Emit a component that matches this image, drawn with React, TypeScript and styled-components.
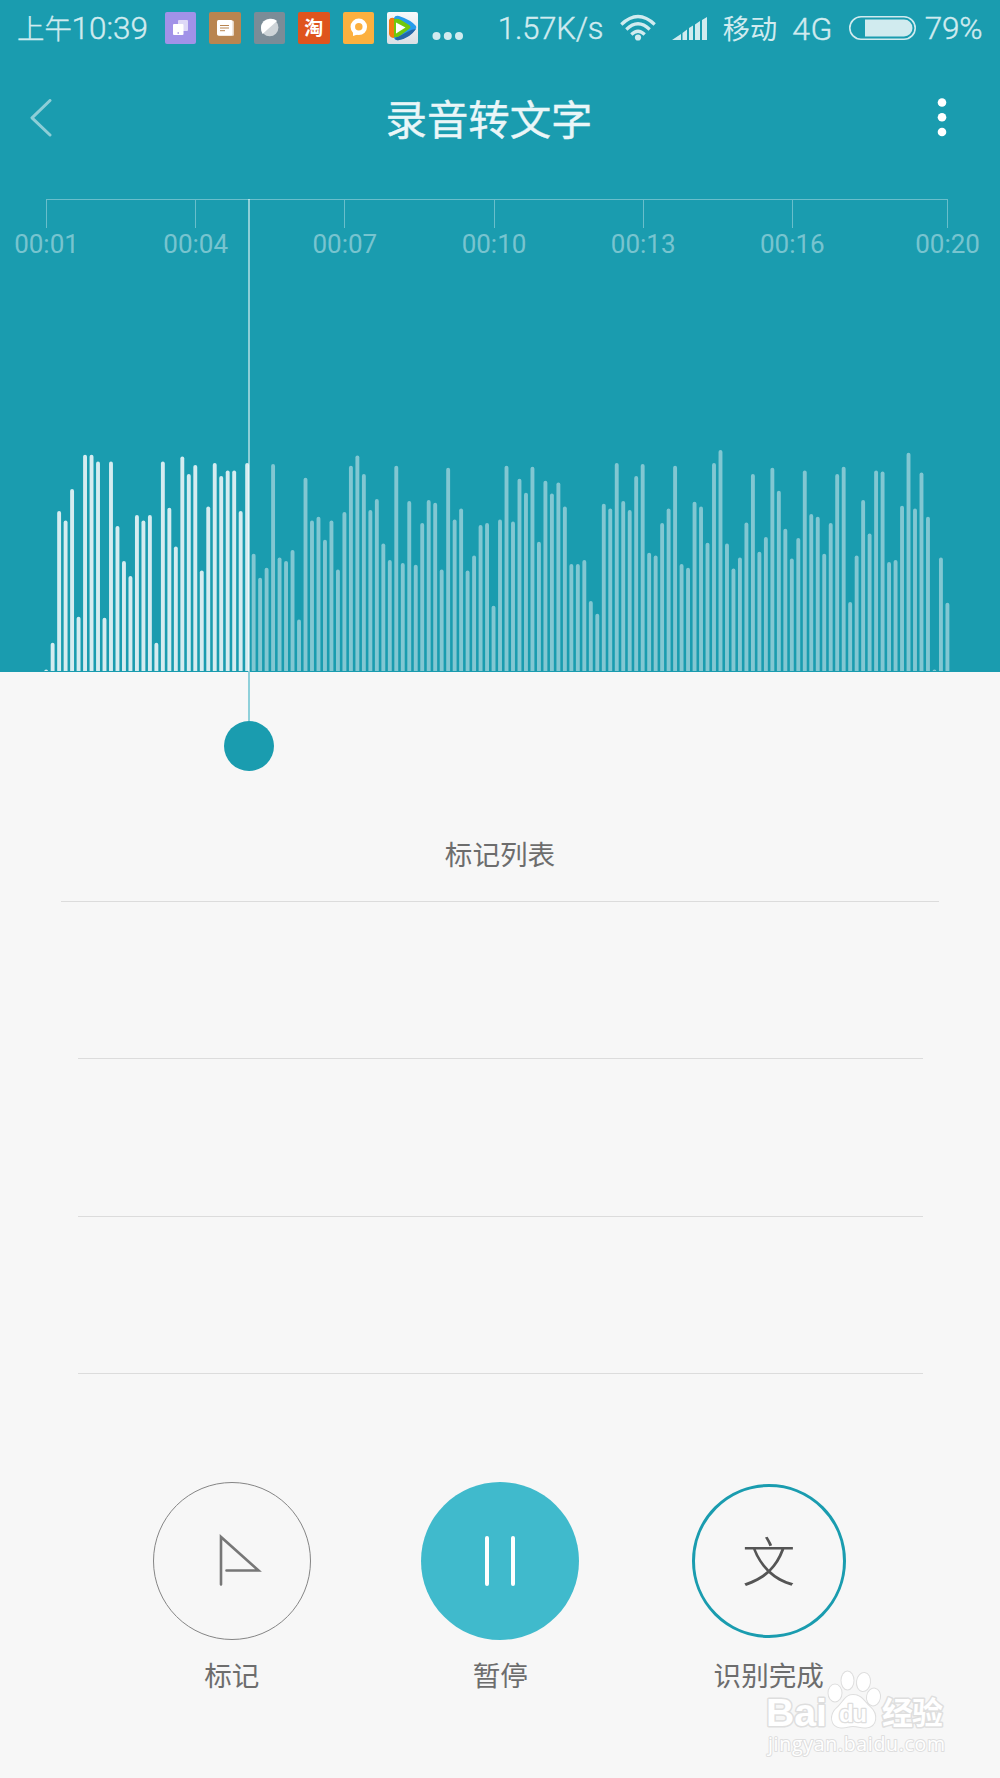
import React from "react";
import styled, { createGlobalStyle } from "styled-components";

const TEAL = "#1a9caf";
const SOFT = "rgba(255,255,255,0.8)";
const CJK = '"Noto Sans CJK SC", sans-serif';
const LATIN = 'Roboto, "Noto Sans CJK SC", sans-serif';

const GlobalStyle = createGlobalStyle`
  * { box-sizing: border-box; }
  body { margin: 0; background: #f7f7f7; }
  svg { display: block; }
`;

const Screen = styled.main`
  width: 1000px;
  height: 1778px;
  background: #f7f7f7;
  position: relative;
  overflow: hidden;
  display: flex;
  flex-direction: column;
  font-family: ${CJK};
`;

const Top = styled.section`
  height: 672px;
  flex: none;
  background: ${TEAL};
  position: relative;
  display: flex;
  flex-direction: column;
`;

const StatusBar = styled.div`
  height: 56px;
  flex: none;
  display: flex;
  align-items: center;
  color: #d1ebef;
  padding-left: 17px;
`;

const StatusText = styled.span<{ w: number; size: number; ls?: number; ml?: number; cjk?: boolean; weight?: number }>`
  width: ${(p) => p.w}px;
  margin-left: ${(p) => p.ml ?? 0}px;
  padding-top: ${(p) => (p.cjk ? 0 : 2)}px;
  padding-bottom: ${(p) => (p.cjk ? 2 : 0)}px;
  flex: none;
  font-family: ${(p) => (p.cjk ? CJK : LATIN)};
  font-size: ${(p) => p.size}px;
  font-weight: ${(p) => p.weight ?? 400};
  letter-spacing: ${(p) => p.ls ?? 0}px;
  -webkit-text-stroke: ${(p) => (p.weight === 300 ? 0.4 : 0)}px currentColor;
  line-height: 54px;
  white-space: nowrap;
`;

const Glyph = styled.svg<{ ml: number }>`
  flex: none;
  margin-left: ${(p) => p.ml}px;
`;

const AppIcon = styled.div<{ bg: string; first?: boolean }>`
  width: 31.4px;
  height: 31.4px;
  flex: none;
  border-radius: 2px;
  margin-left: ${(p) => (p.first ? 0 : 13)}px;
  background: ${(p) => p.bg};
  color: #fff;
  font: 700 19px/30px ${CJK};
  text-align: center;
`;

const TitleBar = styled.header`
  height: 124px;
  flex: none;
  display: flex;
  align-items: center;
  justify-content: space-between;
  padding: 0 52px 0 30px;
`;

const Title = styled.h1`
  margin: 0 0 3px -10px;
  font: 400 41.4px/60px ${CJK};
  -webkit-text-stroke: 0.4px currentColor;
  color: #eaf6f8;
`;

const Ruler = styled.div`
  margin: 19px 0 0 46px;
  width: 902px;
  border-top: 1px solid rgba(255, 255, 255, 0.35);
  display: flex;
`;

const Tick = styled.div<{ last?: boolean }>`
  width: ${(p) => (p.last ? 1 : 149.2)}px;
  margin-left: ${(p) => (p.last ? 6 : 0)}px;
  height: 26px;
  border-left: 1px solid rgba(255, 255, 255, 0.35);
  padding-top: 28px;
`;

const TickLabel = styled.span`
  display: block;
  width: 90px;
  margin-left: -45.5px;
  text-align: center;
  font: 400 26px/32px ${LATIN};
  color: rgba(255, 255, 255, 0.42);
`;

const Wave = styled.svg`
  margin-top: auto;
  flex: none;
`;

const Playhead = styled.div`
  position: absolute;
  left: 224px;
  top: 199px;
  width: 50px;
  display: flex;
  flex-direction: column;
  align-items: center;
`;

const Stem = styled.i<{ h: number; c: string }>`
  width: 2px;
  height: ${(p) => p.h}px;
  background: ${(p) => p.c};
`;

const Knob = styled.i`
  width: 50px;
  height: 50px;
  border-radius: 50%;
  background: ${TEAL};
`;

const ListTitle = styled.h2`
  margin: 161px 61px 0;
  height: 69px;
  font: 400 27.6px/40px ${CJK};
  color: #6d6d6d;
  text-align: center;
  border-bottom: 1px solid #dcdcdc;
`;

const MarkRow = styled.div`
  height: 157.300px;
  margin: 0 77.500px;
  border-bottom: 1px solid #dcdcdc;
`;

const Controls = styled.nav`
  margin: 108px 97px 0 97.500px;
  display: flex;
`;

const Control = styled.div`
  width: 268.600px;
  display: flex;
  flex-direction: column;
  align-items: center;
`;

const Round = styled.div<{ kind: "plain" | "fill" | "ring" }>`
  width: ${(p) => (p.kind === "ring" ? 154 : 158)}px;
  height: ${(p) => (p.kind === "ring" ? 154 : 158)}px;
  margin: ${(p) => (p.kind === "ring" ? 2 : 0)}px 0;
  border-radius: 50%;
  display: flex;
  align-items: center;
  justify-content: center;
  background: ${(p) => (p.kind === "fill" ? "#40bacc" : "transparent")};
  border: ${(p) => (p.kind === "ring" ? `3px solid ${TEAL}` : p.kind === "plain" ? "1px solid #858585" : "0")};
`;

const WenGlyph = styled.span`
  padding-bottom: 4px;
  font: 300 53.500px/60px ${CJK};
  color: #555;
`;

const ControlLabel = styled.span`
  margin-top: 14px;
  font: 400 27.6px/40px ${CJK};
  color: #6d6d6d;
`;

const Watermark = styled.svg`
  position: absolute;
  left: 760px;
  top: 1665px;
`;

const LEVELS = [
  688,608,213,241,147,530,44,44,64,533,64,258,363,408,225,241,225,608,64,203,319,49,102,75,391,199,69,108,91,91,213,69,
  341,413,383,72,352,363,330,538,113,241,230,299,241,388,216,77,46,102,210,177,310,360,77,369,183,374,249,180,188,388,83,238,205,391,346,255,249,
  497,238,77,244,116,158,80,305,122,160,127,199,372,372,360,483,521,191,205,69,183,210,108,72,338,346,249,205,77,372,383,185,199,308,69,30,310,
  385,352,247,102,335,291,83,152,266,355,294,91,222,230,341,249,102,80,486,346,180,280,91,94,366,360,197,38,205,97,230,688,352,488,
].map((t) => (694 - t) / 3);
const PLAYED = 32;
const TIMES = ["00:01", "00:04", "00:07", "00:10", "00:13", "00:16", "00:20"];

function StatusIcons() {
  return (
    <>
      <AppIcon bg="#a192e8" first>
        <svg width="31" height="31"><rect x="13" y="8" width="10" height="11" rx="1" fill="#fff" opacity=".65" /><rect x="8" y="12" width="10.500" height="11" rx="1" fill="#fff" /><circle cx="13.200" cy="21" r=".8" fill="#8878d8" /></svg>
      </AppIcon>
      <AppIcon bg="#b98550">
        <svg width="31" height="31"><rect x="9" y="8.500" width="16" height="15.500" rx="1.500" fill="#e5d3c0" /><rect x="8" y="8" width="15.500" height="15.500" rx="1.500" fill="#fff" /><path d="M11 13.500h9M11 16h9M11 18.700h5" stroke="#b98550" strokeWidth="1" /></svg>
      </AppIcon>
      <AppIcon bg="#7b8c97">
        <svg width="31" height="31"><circle cx="15.700" cy="15.500" r="8.700" fill="#ced4d8" /><path d="M8.500 22 23 9C17 3.500 7 8.500 7 15.500Q7 19.500 8.500 22Z" fill="#fff" /></svg>
      </AppIcon>
      <AppIcon bg="#df541d">淘</AppIcon>
      <AppIcon bg="#fcb03f">
        <svg width="31" height="31"><circle cx="15.800" cy="14.800" r="6" fill="none" stroke="#fff" strokeWidth="4.500" /><path d="M10 18v6l6-2z" fill="#fff" /></svg>
      </AppIcon>
      <AppIcon bg="linear-gradient(#f8fafb,#dadfe5)">
        <svg width="31" height="31">
          <path d="M7 6Q8 3 12 4Q24 8 29 14Q30 16 28 18Q21 26 12 28Q8 29 7 26Z" fill="#279cec" />
          <path d="M12 28Q23 26 29 17Q25 17 20 20T8 26Q9 29 12 28Z" fill="#2567a9" />
          <path d="M2 8Q3 5 7 6V26Q3 26 2 22Z" fill="#f27b13" />
          <path d="M7 7Q10 6 14 8L22 13Q25 15 22 17L14 23Q10 26 7 25Z" fill="#71c80c" />
          <path d="M9 10.500 18.500 15.500 9 21.500Z" fill="#fff" />
        </svg>
      </AppIcon>
    </>
  );
}

export default function App() {
  return (
    <Screen>
      <GlobalStyle />
      <Top>
        <StatusBar>
          <StatusText w={54.500} size={27.400} cjk weight={300}>上午</StatusText>
          <StatusText w={93.500} size={31.500} ls={0} weight={300}>10:39</StatusText>
          <StatusIcons />
          <Glyph ml={14} width="31" height="30"><g fill={SOFT}><circle cx="4.500" cy="23" r="4" /><circle cx="15.800" cy="23" r="4" /><circle cx="27" cy="23" r="4" /></g></Glyph>
          <StatusText ml={34.500} w={122} size={31} ls={-0.15} weight={300}>1.57K/s</StatusText>
          <Glyph ml={0} width="36" height="28">
            <g fill="none" stroke={SOFT} strokeWidth="3.200">
              <path d="M1.300 10.500Q18 -5.500 34.700 10.500" />
              <path d="M6.300 15.500Q18 4 29.700 15.500" />
              <path d="M11.300 20.500Q18 14 24.700 20.500" />
            </g>
            <circle cx="18" cy="23.500" r="3.100" fill={SOFT} />
          </Glyph>
          <Glyph ml={16} width="36" height="26">
            <path fill={SOFT} d="M0 25 9 19V25ZM10.500 25V18L15 14.500V25ZM17 25V13L21 10.500V25ZM23 25V9.500L28 6V25ZM30 25V5L35 2V25Z" />
          </Glyph>
          <StatusText ml={15} w={69.500} size={27.200} cjk>移动</StatusText>
          <StatusText w={57} size={32} ls={0.3} weight={300}>4G</StatusText>
          <Glyph ml={0} width="67" height="24">
            <rect x=".8" y=".8" width="65.400" height="22.400" rx="11.200" fill="none" stroke={SOFT} strokeWidth="1.600" />
            <path d="M16 3.500H55A8.500 8.500 0 0 1 55 20.500H16Z" fill={SOFT} />
          </Glyph>
          <StatusText ml={8.500} w={70} size={31.500} ls={-0.3} weight={300}>79%</StatusText>
        </StatusBar>
        <TitleBar>
          <svg width="22" height="38"><path d="M20 1.500 2 18.800 20 36" fill="none" stroke="rgba(255,255,255,.5)" strokeWidth="3" strokeLinecap="round" strokeLinejoin="round" /></svg>
          <Title>录音转文字</Title>
          <svg width="12" height="40" fill="#fff"><circle cx="6" cy="4.500" r="4.300" /><circle cx="6" cy="19.300" r="4.300" /><circle cx="6" cy="34" r="4.300" /></svg>
        </TitleBar>
        <Ruler>
          {TIMES.map((t, i) => (
            <Tick key={t} last={i === TIMES.length - 1}><TickLabel>{t}</TickLabel></Tick>
          ))}
        </Ruler>
        <Wave width="1000" height="240">
          {LEVELS.map((h, i) => (
            <path
              key={i}
              d={`M${44.2 + i * 6.484} 239V${241.4 - h}q0-2 1.950-2t1.950 2V239z`}
              fill={i < PLAYED ? "#d5ecf0" : "#82c7d2"}
            />
          ))}
        </Wave>
        <Playhead>
          <Stem h={473} c="rgba(255,255,255,.5)" />
          <Stem h={49} c="#8fd0da" />
          <Knob />
        </Playhead>
      </Top>
      <ListTitle>标记列表</ListTitle>
      <MarkRow />
      <MarkRow />
      <MarkRow />
      <Controls>
        <Control>
          <Round kind="plain">
            <svg width="156" height="156"><path d="M67 101.500V54L104.500 87.500H72.500" fill="none" stroke="#777" strokeWidth="2.600" strokeLinecap="round" /></svg>
          </Round>
          <ControlLabel>标记</ControlLabel>
        </Control>
        <Control>
          <Round kind="fill">
            <svg width="158" height="158"><path d="M66 56v46M92 56v46" stroke="#fff" strokeWidth="4" strokeLinecap="round" /></svg>
          </Round>
          <ControlLabel>暂停</ControlLabel>
        </Control>
        <Control>
          <Round kind="ring"><WenGlyph>文</WenGlyph></Round>
          <ControlLabel>识别完成</ControlLabel>
        </Control>
      </Controls>
      <Watermark width="200" height="100">
        <g fill="#fff" stroke="#dedede" strokeWidth="3" paintOrder="stroke" strokeLinejoin="round">
          <text x="6" y="61" fontFamily="Liberation Sans" fontWeight="700" fontSize="39" textLength="61" lengthAdjust="spacingAndGlyphs">Bai</text>
          <ellipse cx="75" cy="28" rx="6.500" ry="8.500" strokeWidth="2" />
          <ellipse cx="87.500" cy="15.500" rx="6" ry="9" strokeWidth="2" />
          <ellipse cx="103.500" cy="17" rx="6.500" ry="9" strokeWidth="2" transform="rotate(8 103.500 17)" />
          <ellipse cx="113.500" cy="32" rx="6.500" ry="8.500" strokeWidth="2" transform="rotate(10 113.500 32)" />
          <path d="M93 30C102 30 104 37 110 42C118 49 117 62 106 62.500C101 63 98 61 93 61S86 63 81 62.500C71 62 69 50 77 43C83 38 85 30 93 30Z" strokeWidth="2" />
          <text x="79" y="56.500" fontFamily="Liberation Sans" fontWeight="700" fontSize="24" textLength="28" strokeWidth="2.600">du</text>
          <text x="122" y="59" fontFamily="Noto Sans CJK SC" fontWeight="700" fontSize="31" textLength="61">经验</text>
          <text x="8" y="85.500" fontFamily="Open Sans" fontSize="19.500" textLength="177" strokeWidth="2">jingyan.baidu.com</text>
        </g>
      </Watermark>
    </Screen>
  );
}
